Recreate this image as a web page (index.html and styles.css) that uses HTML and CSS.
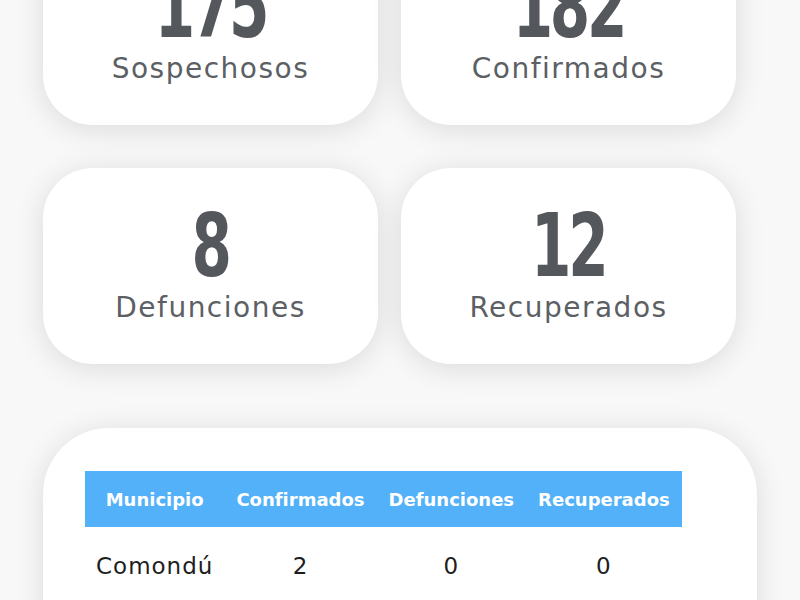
FILE: index.html
```html
<!DOCTYPE html>
<html lang="es">
<head>
<meta charset="utf-8">
<title>Casos</title>
<link rel="stylesheet" href="styles.css">
</head>
<body>
<main class="page">
  <section class="stats">
    <div class="card"><div class="num">175</div><div class="label">Sospechosos</div></div>
    <div class="card"><div class="num">182</div><div class="label">Confirmados</div></div>
    <div class="card"><div class="num">8</div><div class="label">Defunciones</div></div>
    <div class="card"><div class="num">12</div><div class="label">Recuperados</div></div>
  </section>
  <section class="table-card">
    <table class="tbl">
      <thead>
        <tr><th>Municipio</th><th>Confirmados</th><th>Defunciones</th><th>Recuperados</th></tr>
      </thead>
      <tbody>
        <tr><td class="name">Comondú</td><td>2</td><td>0</td><td>0</td></tr>
      </tbody>
    </table>
  </section>
</main>
</body>
</html>
```
FILE: styles.css
```css
html, body {
  margin: 0;
  padding: 0;
}
body {
  background: #f8f8f8;
  font-family: "DejaVu Sans", sans-serif;
  overflow: hidden;
}
.page {
  padding: 0 43px;
}
.stats {
  display: grid;
  grid-template-columns: 335px 335px;
  grid-auto-rows: 196px;
  column-gap: 23px;
  row-gap: 43px;
  margin-top: -71px;
}
.card {
  background: #fff;
  border-radius: 50px;
  box-shadow: 0 4px 30px rgba(0, 0, 0, 0.12);
  display: flex;
  flex-direction: column;
  align-items: center;
  padding-top: 33px;
  box-sizing: border-box;
}
.num {
  font-family: "DejaVu Sans", sans-serif;
  font-weight: 700;
  font-size: 88px;
  line-height: 89px;
  height: 89px;
  letter-spacing: -5px;
  color: #54575c;
  transform: scaleX(0.66);
}
.label {
  margin-top: 1px;
  font-size: 28px;
  line-height: 1.2;
  letter-spacing: 1.5px;
  color: #5c5f64;
}
.table-card {
  margin-top: 64px;
  background: #fff;
  border-radius: 66px;
  box-shadow: 0 4px 30px rgba(0, 0, 0, 0.12);
  padding: 43px 42px 120px;
}
.tbl {
  border-collapse: collapse;
}
.tbl th {
  background: #52b1f8;
  color: #fff;
  font-weight: 700;
  font-size: 18px;
  height: 56px;
  padding: 0 12px;
  text-align: center;
}
.tbl td {
  font-size: 23px;
  line-height: 24px;
  color: #1e1e1e;
  padding: 27px 11px 20px;
  text-align: center;
  letter-spacing: 1px;
}
.tbl td.name {
  text-align: left;
}
```
